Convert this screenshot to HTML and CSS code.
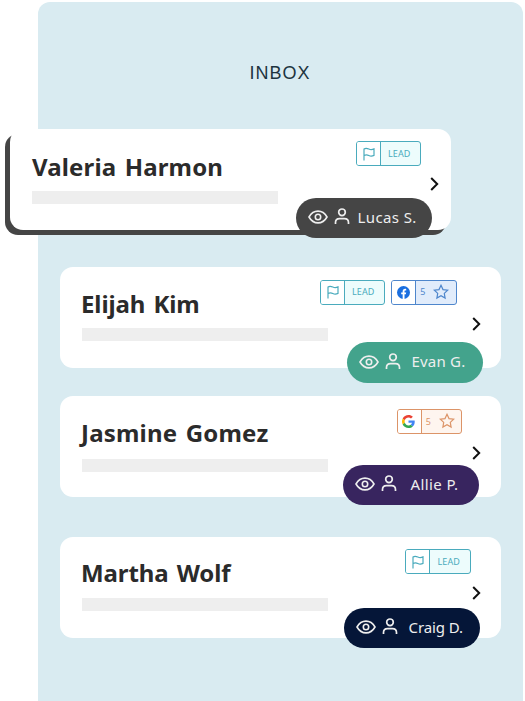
FILE: index.html
```html
<!DOCTYPE html>
<html lang="en">
<head>
    <meta charset="UTF-8">
    <title>Inbox</title>
    <link rel="stylesheet" href="styles.css">
</head>
<body>

    <!-- shared icons -->
    <svg class="sprite" width="0" height="0">
        <symbol id="flag" viewBox="0 0 12 14">
            <path d="M1 13.500V2c1.600-1.200 3.200-.8 4.800 0s3.400.8 5.200-.1v6.500c-1.800.9-3.600.9-5.200.1S2.600 7.600 1 8.600" />
        </symbol>
        <symbol id="star" viewBox="0 0 16 16">
            <path d="M8 1.300l2 4.300 4.700.6-3.400 3.200.8 4.700L8 11.800l-4.100 2.300.8-4.700L1.300 6.200l4.700-.6z" />
        </symbol>
        <symbol id="eye" viewBox="0 0 20 14">
            <path d="M1 7c2.200-3.900 5.300-5.900 9-5.900s6.800 2 9 5.900c-2.200 3.900-5.300 5.900-9 5.900S3.200 10.900 1 7z" />
            <circle cx="10" cy="7" r="2.700" />
        </symbol>
        <symbol id="person" viewBox="0 0 16 17">
            <circle cx="8" cy="4.300" r="3.300" />
            <path d="M1.500 16v-1.500c0-2.500 1.500-3.900 4-3.900h5c2.500 0 4 1.400 4 3.900V16" />
        </symbol>
        <symbol id="chevron" viewBox="0 0 9 14">
            <path d="M1.200 1l6 6-6 6" />
        </symbol>
    </svg>

    <div class="panel">
        <h1 class="title">INBOX</h1>

        <div class="card card-valeria">
            <div class="info">
                <h2>Valeria Harmon</h2>
                <div class="line"></div>
            </div>
            <div class="side">
                <div class="tags">
                    <div class="tag lead"><span class="tag-icon"><svg class="flag"><use href="#flag" /></svg></span><span class="tag-text">LEAD</span></div>
                </div>
                <svg class="chevron"><use href="#chevron" /></svg>
            </div>
            <div class="pill"><svg class="eye"><use href="#eye" /></svg><svg class="person"><use href="#person" /></svg><span>Lucas S.</span></div>
        </div>

        <div class="card card-elijah">
            <div class="info">
                <h2>Elijah Kim</h2>
                <div class="line"></div>
            </div>
            <div class="side">
                <div class="tags">
                    <div class="tag lead"><span class="tag-icon"><svg class="flag"><use href="#flag" /></svg></span><span class="tag-text">LEAD</span></div>
                    <div class="tag facebook">
                        <span class="tag-icon">
                            <svg class="logo" viewBox="0 0 14 14">
                                <circle cx="7" cy="7" r="7" fill="#1a6fe0" />
                                <path d="M6.100 14V9H4.500V7h1.600V5.700c0-1.800 1-2.700 2.600-2.700.5 0 1 .1 1.200.1v1.700h-.8c-.8 0-1 .4-1 1V7h1.800l-.3 2H8.100v5z" fill="#fff" />
                            </svg>
                        </span>
                        <span class="tag-text">5 <svg class="star"><use href="#star" /></svg></span>
                    </div>
                </div>
                <svg class="chevron"><use href="#chevron" /></svg>
            </div>
            <div class="pill"><svg class="eye"><use href="#eye" /></svg><svg class="person"><use href="#person" /></svg><span>Evan G.</span></div>
        </div>

        <div class="card card-jasmine">
            <div class="info">
                <h2>Jasmine Gomez</h2>
                <div class="line"></div>
            </div>
            <div class="side">
                <div class="tags">
                    <div class="tag google">
                        <span class="tag-icon">
                            <svg class="logo" viewBox="0 0 48 48">
                                <path fill="#EA4335" d="M24 9.500c3.540 0 6.710 1.220 9.210 3.600l6.850-6.850C35.900 2.380 30.470 0 24 0 14.620 0 6.510 5.380 2.560 13.220l7.980 6.190C12.430 13.720 17.740 9.500 24 9.500z" />
                                <path fill="#4285F4" d="M46.980 24.550c0-1.570-.15-3.090-.38-4.550H24v9.020h12.940c-.58 2.960-2.260 5.480-4.780 7.180l7.730 6c4.510-4.180 7.090-10.360 7.090-17.650z" />
                                <path fill="#FBBC05" d="M10.530 28.590c-.48-1.450-.76-2.990-.76-4.590s.27-3.140.76-4.590l-7.980-6.190C.92 16.460 0 20.120 0 24s.92 7.540 2.560 10.780z" />
                                <path fill="#34A853" d="M24 48c6.480 0 11.930-2.130 15.890-5.810l-7.730-6c-2.150 1.450-4.920 2.300-8.160 2.300-6.260 0-11.570-4.220-13.470-9.910l-7.980 6.190C6.510 42.620 14.620 48 24 48z" />
                            </svg>
                        </span>
                        <span class="tag-text">5 <svg class="star"><use href="#star" /></svg></span>
                    </div>
                </div>
                <svg class="chevron"><use href="#chevron" /></svg>
            </div>
            <div class="pill"><svg class="eye"><use href="#eye" /></svg><svg class="person"><use href="#person" /></svg><span>Allie P.</span></div>
        </div>

        <div class="card card-martha">
            <div class="info">
                <h2>Martha Wolf</h2>
                <div class="line"></div>
            </div>
            <div class="side">
                <div class="tags">
                    <div class="tag lead"><span class="tag-icon"><svg class="flag"><use href="#flag" /></svg></span><span class="tag-text">LEAD</span></div>
                </div>
                <svg class="chevron"><use href="#chevron" /></svg>
            </div>
            <div class="pill"><svg class="eye"><use href="#eye" /></svg><svg class="person"><use href="#person" /></svg><span>Craig D.</span></div>
        </div>
    </div>

</body>
</html>
```
FILE: styles.css
```css
* {
    box-sizing: border-box;
}

body {
    margin: 0;
    padding: 2px 2px 0 38px;
    height: 701px;
    overflow: hidden;
    background: #fff;
    font-family: "Noto Sans", sans-serif;
}

svg {
    display: block;
    flex: none;
    fill: none;
    stroke: currentColor;
}

.sprite {
    position: absolute;
}

.panel {
    height: 699px;
    background: #d9ebf1;
    border-radius: 12px 12px 0 0;
}

.title {
    margin: 0;
    height: 127px;
    padding: 59px 1px 0 0;
    font-family: "Liberation Sans", Arial, sans-serif;
    font-size: 18px;
    font-weight: 400;
    line-height: 24px;
    letter-spacing: 1px;
    text-align: center;
    color: #1d3440;
}

/* cards */

.card {
    position: relative;
    display: flex;
    justify-content: space-between;
    width: 441px;
    height: 101px;
    margin-left: 22px;
    padding-left: 22px;
    background: #fff;
    border-radius: 13px;
}

.card h2 {
    margin: 0 0 0 -1px;
    height: 56px;
    padding-top: 20px;
    font-size: 24px;
    font-weight: 700;
    line-height: 34px;
    letter-spacing: -0.1px;
    word-spacing: 2px;
    white-space: nowrap;
    color: #2b2b2b;
}

.line {
    width: 246px;
    height: 13px;
    margin-top: 6px;
    background: #eee;
}

.side {
    display: flex;
    flex: none;
    flex-direction: column;
    align-items: flex-end;
    margin-left: -20px;
    padding: 13px 20px 0 0;
}

.card-valeria {
    margin-left: -28px;
    box-shadow: -5px 5px 0 #454545;
}

.card-elijah {
    margin-top: 36.5px;
}

.card-jasmine {
    margin-top: 28.5px;
}

.card-martha {
    margin-top: 40px;
}

.card-valeria h2 {
    margin-left: 0;
    padding-top: 21px;
    letter-spacing: 0.15px;
}

.card-elijah h2 {
    padding-top: 20px;
}

.card-jasmine h2 {
    letter-spacing: 0.2px;
}

.card-martha h2 {
    padding-top: 19px;
}

.card-elijah .line {
    margin-top: 5px;
}

.card-jasmine .line {
    margin-top: 7px;
}

.card-martha .line {
    margin-top: 5px;
}

.card-valeria .side {
    padding: 12px 12px 0 0;
}

/* tags */

.tags {
    display: flex;
    gap: 6px;
    margin-right: 19px;
}

.card-valeria .tags {
    margin-right: 18px;
}

.card-elijah .tags {
    margin-right: 24.5px;
}

.card-martha .side {
    padding-top: 12px;
}

.card-martha .tags {
    margin-right: 10.5px;
}

.tag {
    display: flex;
    width: 65.5px;
    height: 25px;
    border: 1px solid;
    border-radius: 3px;
    overflow: hidden;
    font-size: 9px;
}

.tag-icon {
    display: flex;
    align-items: center;
    justify-content: center;
    width: 24px;
    border-right: 1px solid;
    background: #fff;
}

.tag-text {
    flex: 1;
    display: flex;
    align-items: center;
    justify-content: center;
    gap: 8px;
    padding: 0 2px 1px 0;
}

.lead {
    color: #4aabbd;
    background: #edfcfc;
}

.lead .tag-text {
    letter-spacing: 0.1px;
}

.facebook {
    color: #4e86cc;
    background: #e1ecfb;
}

.google {
    color: #dc9468;
    background: #fef5ef;
}

.flag {
    width: 12px;
    height: 14px;
    margin-left: 1px;
    stroke-width: 1.2;
}

.star {
    width: 16px;
    height: 16px;
    stroke-width: 1.2;
}

.logo {
    width: 13px;
    height: 13px;
    margin-right: 1px;
    stroke: none;
}

.chevron {
    width: 9px;
    height: 14px;
    margin-top: 12px;
    color: #111;
    stroke-width: 2;
}

.card-valeria .chevron {
    margin-top: 11px;
}

/* assignee pill, hangs over the bottom edge of the card */

.pill {
    position: absolute;
    right: 22px;
    bottom: -8px;
    display: flex;
    align-items: center;
    width: 136.5px;
    height: 40.5px;
    padding-left: 12px;
    border-radius: 20.5px;
    font-size: 15px;
    white-space: nowrap;
    color: #eee;
}

.pill span {
    padding-bottom: 2px;
    letter-spacing: 0.1px;
}

.eye {
    width: 20px;
    height: 14px;
    margin-right: 6px;
    margin-top: -1px;
    stroke-width: 1.6;
}

.person {
    width: 16px;
    height: 17px;
    margin-top: -2px;
    margin-right: 11px;
    stroke-width: 1.7;
}

.card-valeria .pill {
    right: 19px;
    background: #454545;
}

.card-valeria .person {
    margin-right: 8px;
}

.card-valeria .pill span {
    letter-spacing: 0.4px;
}

.card-elijah .pill {
    right: 18px;
    bottom: -15px;
    background: #43a38c;
}

.card-elijah .pill span {
    letter-spacing: 0.2px;
}

.card-jasmine .pill {
    background: #38255f;
}

.card-jasmine .person {
    margin-right: 14px;
}

.card-jasmine .pill span {
    letter-spacing: 0.4px;
}

.card-martha .pill {
    right: 21px;
    bottom: -10px;
    background: #051638;
}

.card-martha .pill span {
    letter-spacing: -0.1px;
}
```
